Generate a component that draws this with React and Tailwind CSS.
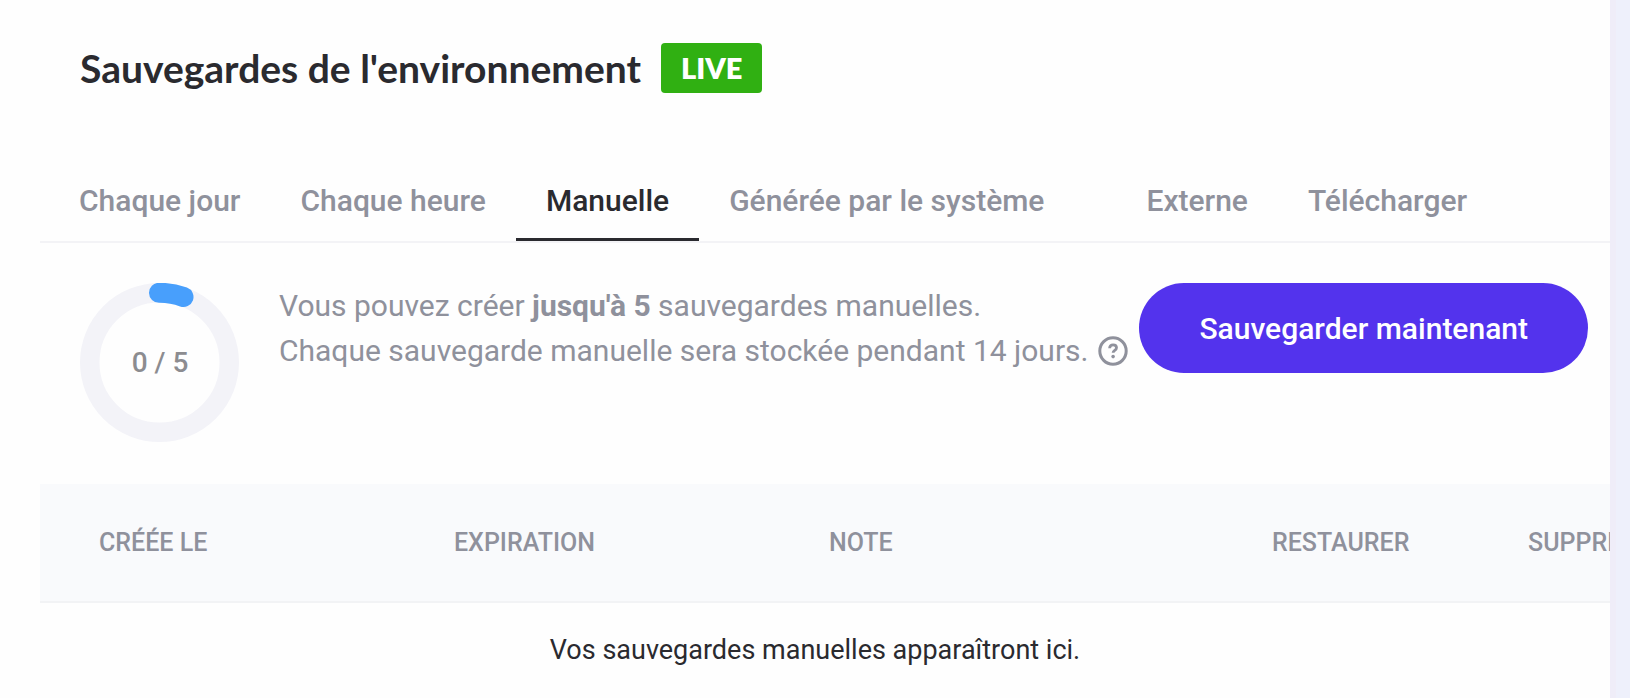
import React, { useState } from 'react';

const TABS = [
  { id: 'daily', label: 'Chaque jour' },
  { id: 'hourly', label: 'Chaque heure' },
  { id: 'manual', label: 'Manuelle' },
  { id: 'system', label: 'Générée par le système' },
  { id: 'external', label: 'Externe', spaced: true },
  { id: 'download', label: 'Télécharger' },
];

const COLUMNS = [
  { label: 'Créée le', width: 'w-[355px]' },
  { label: 'Expiration', width: 'w-[375px]' },
  { label: 'Note', width: 'w-[443px]' },
  { label: 'Restaurer', width: 'w-[256px]' },
  { label: 'Suppre', width: '' },
];

// Ring with a short rounded arc at the top
const UsageRing = ({ used, total }) => (
  <div className="relative w-40 h-40 shrink-0">
    <svg viewBox="0 0 160 160" className="w-full h-full" fill="none" aria-hidden="true">
      <circle cx="79.5" cy="79.5" r="69.75" stroke="#f3f3f8" strokeWidth="19.5" />
      <path d="M79 9.8 A69.7 69.7 0 0 1 103.5 14" stroke="#489ffc" strokeWidth="20" strokeLinecap="round" />
    </svg>
    <span className="absolute inset-0 flex items-center justify-center text-[28px] font-medium text-[#8c8c90]">
      {used} / {total}
    </span>
  </div>
);

const HelpIcon = () => (
  <svg viewBox="0 0 30 30" className="w-[30px] h-[30px]" fill="none" stroke="currentColor" aria-hidden="true">
    <circle cx="15" cy="15" r="13.2" strokeWidth="3" />
    <path d="M11.6 12.2c.1-2.1 1.4-3.4 3.5-3.4s3.4 1.2 3.4 3c0 2.7-3.4 2.6-3.4 5" strokeWidth="2.8" />
    <circle cx="15.1" cy="20.6" r="1.8" fill="currentColor" stroke="none" />
  </svg>
);

const App = () => {
  const [activeTab, setActiveTab] = useState('manual');

  return (
    <div className="flex min-h-screen bg-[#eef0fb] font-['Roboto',sans-serif] text-[#2a2a2f]">
      <main className="flex-1 min-w-0 overflow-hidden bg-[#fefefe] pl-10">
        {/* Header */}
        <header className="flex items-center gap-5 px-10 pt-[43px]">
          <h1 className="font-['Lato',sans-serif] text-[39px] leading-[50px] font-bold whitespace-nowrap">
            Sauvegardes de l'environnement
          </h1>
          <span className="rounded-[4px] bg-[#30b012] px-5 font-['Lato',sans-serif] text-[29px] leading-[50px] font-extrabold text-white">
            LIVE
          </span>
        </header>

        {/* Tabs */}
        <nav role="tablist" className="mt-[67px] flex border-b-2 border-[#f3f3f6] pl-[9px]">
          {TABS.map((tab) => (
            <button
              key={tab.id}
              type="button"
              role="tab"
              aria-selected={activeTab === tab.id}
              onClick={() => setActiveTab(tab.id)}
              className={`px-[30px] pt-[21px] pb-[17px] text-[30px] leading-10 font-medium whitespace-nowrap border-b-3 ${
                tab.spaced ? 'ml-[42px]' : ''
              } ${activeTab === tab.id ? 'border-[#2a2a2f] text-[#2a2a2f]' : 'border-transparent text-[#8f919c]'}`}
            >
              {tab.label}
            </button>
          ))}
        </nav>

        {/* Usage and action */}
        <section className="flex items-start pt-10 pr-[22px] pb-[41px] pl-10">
          <UsageRing used={0} total={5} />
          <div className="ml-[39px] text-[30px] leading-[45px] whitespace-nowrap text-[#8f919c]">
            <p>
              Vous pouvez créer <strong className="font-bold">jusqu'à 5</strong> sauvegardes manuelles.
            </p>
            <p className="flex items-center gap-[10px]">
              Chaque sauvegarde manuelle sera stockée pendant 14 jours.
              <button type="button" aria-label="Aide">
                <HelpIcon />
              </button>
            </p>
          </div>
          <button
            type="button"
            className="ml-auto h-[90px] shrink-0 rounded-full bg-[#5333ed] px-[60px] text-[30px] font-medium whitespace-nowrap text-white"
          >
            Sauvegarder maintenant
          </button>
        </section>

        {/* Backups */}
        <table className="w-full table-fixed border-collapse">
          <thead className="border-b-2 border-[#f2f3f5] bg-[#f9fafc]">
            <tr>
              {COLUMNS.map((col) => (
                <th
                  key={col.label}
                  scope="col"
                  className={`h-[118px] pl-[59px] text-left text-[25px] font-medium whitespace-nowrap uppercase text-[#8f919c] ${col.width}`}
                >
                  {col.label}
                </th>
              ))}
            </tr>
          </thead>
          <tbody>
            <tr>
              <td colSpan={5} className="h-24 pr-5 text-center text-[27px]">
                Vos sauvegardes manuelles apparaîtront ici.
              </td>
            </tr>
          </tbody>
        </table>
      </main>

      {/* Page gutter */}
      <div className="w-5 shrink-0 border-l-6 border-[#efedf8]" />
    </div>
  );
};

export default App;
